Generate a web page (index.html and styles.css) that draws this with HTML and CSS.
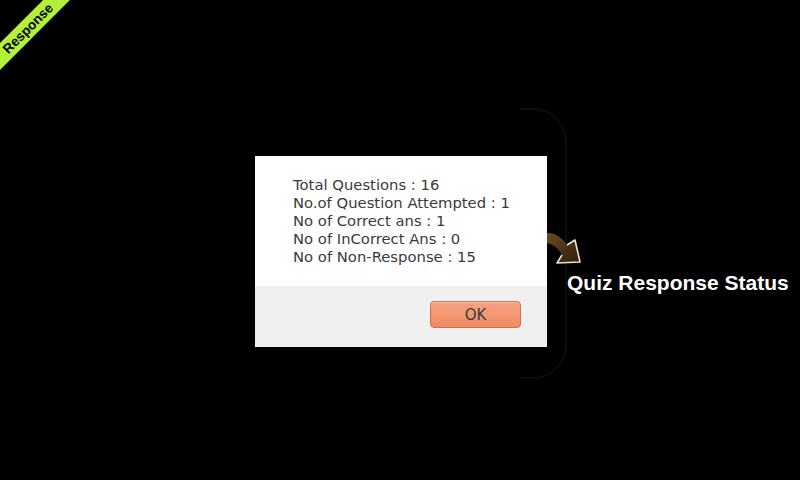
FILE: index.html
```html
<!DOCTYPE html>
<html>
<head>
<meta charset="utf-8">
<link rel="stylesheet" href="styles.css">
</head>
<body>
<div class="screen">
  <div class="ribbon"><span class="ribbon-text">Response</span></div>
  <div class="frame"></div>
  <svg class="arrow" width="40" height="40" viewBox="0 0 40 40">
    <defs>
      <linearGradient id="g" x1="0" y1="0" x2="1" y2="1">
        <stop offset="0" stop-color="#6e4c24"/>
        <stop offset="1" stop-color="#2a1d0c"/>
      </linearGradient>
    </defs>
    <path d="M0 3 C9 2 17 8 21 15 L29 10 L34 32 L11 33 L16 25 C12 18 7 14 0 13 Z" fill="url(#g)" stroke="none"/>
    <path d="M21 15 L29 10 L34 32 L11 33 L16 25" fill="none" stroke="#e8e2d8" stroke-width="1.6" stroke-linejoin="round"/>
  </svg>
  <div class="title">Quiz Response Status</div>
  <div class="dialog">
    <div class="dialog-body">
      <div class="line">Total Questions : 16</div>
      <div class="line">No.of Question Attempted : 1</div>
      <div class="line">No of Correct ans : 1</div>
      <div class="line">No of InCorrect Ans : 0</div>
      <div class="line">No of Non-Response : 15</div>
    </div>
    <div class="dialog-footer">
      <button class="ok">OK</button>
    </div>
  </div>
</div>
</body>
</html>
```
FILE: styles.css
```css
html, body {
  margin: 0;
  padding: 0;
  background: #000;
}
.screen {
  position: relative;
  width: 800px;
  height: 480px;
  overflow: hidden;
  background: #000;
}
.ribbon {
  position: absolute;
  left: -22px;
  top: 19px;
  width: 100px;
  height: 19px;
  display: flex;
  align-items: center;
  justify-content: center;
  background: #b2f03c;
  transform: rotate(-45deg);
}
.ribbon-text {
  display: inline-block;
  color: #000;
  font-family: "Liberation Sans", Arial, sans-serif;
  font-weight: bold;
  font-size: 13.5px;
  line-height: 14px;
}
.frame {
  position: absolute;
  left: 520px;
  top: 108px;
  width: 45px;
  height: 267px;
  border: 2px solid #0c0c0c;
  border-left: none;
  border-radius: 0 34px 34px 0;
}
.arrow {
  position: absolute;
  left: 546px;
  top: 230px;
}
.title {
  position: absolute;
  left: 567px;
  top: 271px;
  color: #fff;
  font-family: "Liberation Sans", Arial, sans-serif;
  font-weight: bold;
  font-size: 21px;
  line-height: 24px;
  white-space: nowrap;
}
.dialog {
  position: absolute;
  left: 255px;
  top: 156px;
  width: 292px;
  height: 191px;
  display: flex;
  flex-direction: column;
  background: #fff;
}
.dialog-body {
  height: 130px;
  box-sizing: border-box;
  padding: 20px 0 0 38px;
  font-family: "DejaVu Sans", sans-serif;
  font-size: 14.8px;
  line-height: 18px;
  color: #3a3a3a;
}
.dialog-footer {
  flex: 1;
  background: #f0f0f0;
  display: flex;
  justify-content: flex-end;
  align-items: flex-start;
  padding: 15px 26px 0 0;
}
.ok {
  width: 91px;
  height: 27px;
  border: 1px solid #d2714e;
  border-radius: 4px;
  background: linear-gradient(#f7a282, #ef8a64);
  color: #3a3a3a;
  font-family: "DejaVu Sans", sans-serif;
  font-size: 15px;
  padding: 0;
  box-shadow: inset 0 1px 0 rgba(255,255,255,0.35);
}
```
